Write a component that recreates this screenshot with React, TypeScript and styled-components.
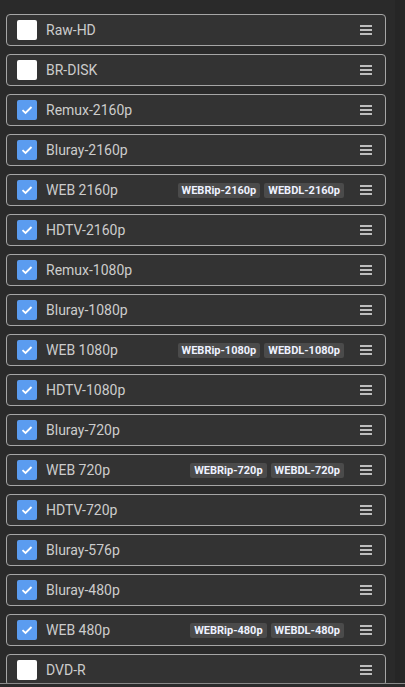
import React from "react";
import styled, { createGlobalStyle } from "styled-components";

const Global = createGlobalStyle`
  html, body { margin: 0; padding: 0; background: #2a2a2a; }
  body { font-family: Roboto, "Noto Sans", sans-serif; overflow: hidden; }
`;

const Page = styled.div`
  width: 405px;
  height: 687px;
  display: flex;
  flex-direction: column;
  overflow: hidden;
`;

const Body = styled.div`
  height: 683px;
  display: flex;
  overflow: hidden;
`;

const List = styled.div`
  width: 395px;
  background: #2a2a2a;
  padding: 14px 0 0 6px;
  box-sizing: border-box;
  display: flex;
  flex-direction: column;
  gap: 8px;
`;

const Track = styled.div`
  flex: 1;
  background: #262626;
`;

const Footer = styled.div`
  flex: 1;
  border-top: 1px solid #8a8a8a;
  background: #2a2a2a;
`;

const Row = styled.div`
  width: 380px;
  height: 32px;
  flex: none;
  box-sizing: border-box;
  border: 1px solid #a6a6a6;
  border-radius: 4px;
  background: #333333;
  display: flex;
  align-items: center;
  padding: 0 13px 0 10px;
`;

const Box = styled.div<{ $checked: boolean }>`
  width: 20px;
  height: 20px;
  border-radius: 2px;
  background: ${(p) => (p.$checked ? "#5b9cf0" : "#ffffff")};
  display: flex;
  align-items: center;
  justify-content: center;
  flex: none;
`;

const Name = styled.span`
  margin-left: 9px;
  font-size: 14px;
  color: #cccccc;
  flex: 1;
`;

const Tags = styled.div`
  display: flex;
  gap: 4px;
  margin-right: 16px;
`;

const Tag = styled.span`
  height: 15px;
  line-height: 15px;
  padding: 0 4px;
  background: #4b4b4b;
  color: #eef2ff;
  font-size: 11px;
  font-weight: 700;
  border-radius: 2px;
`;

const Check = () => (
  <svg width="12" height="10" viewBox="0 0 12 10">
    <path d="M1.5 5.2 L4.5 8 L10.5 2" fill="none" stroke="#fff" strokeWidth="1.8" />
  </svg>
);

const Handle = () => (
  <svg width="12" height="12" viewBox="0 0 12 12">
    <rect x="0" y="1" width="12" height="2" fill="#bdbdbd" />
    <rect x="0" y="5" width="12" height="2" fill="#bdbdbd" />
    <rect x="0" y="9" width="12" height="2" fill="#bdbdbd" />
  </svg>
);

const items: { name: string; checked: boolean; tags?: string[] }[] = [
  { name: "Raw-HD", checked: false },
  { name: "BR-DISK", checked: false },
  { name: "Remux-2160p", checked: true },
  { name: "Bluray-2160p", checked: true },
  { name: "WEB 2160p", checked: true, tags: ["WEBRip-2160p", "WEBDL-2160p"] },
  { name: "HDTV-2160p", checked: true },
  { name: "Remux-1080p", checked: true },
  { name: "Bluray-1080p", checked: true },
  { name: "WEB 1080p", checked: true, tags: ["WEBRip-1080p", "WEBDL-1080p"] },
  { name: "HDTV-1080p", checked: true },
  { name: "Bluray-720p", checked: true },
  { name: "WEB 720p", checked: true, tags: ["WEBRip-720p", "WEBDL-720p"] },
  { name: "HDTV-720p", checked: true },
  { name: "Bluray-576p", checked: true },
  { name: "Bluray-480p", checked: true },
  { name: "WEB 480p", checked: true, tags: ["WEBRip-480p", "WEBDL-480p"] },
  { name: "DVD-R", checked: false },
];

export default function App() {
  return (
    <Page>
      <Global />
      <Body>
        <List>
          {items.map((it) => (
            <Row key={it.name}>
              <Box $checked={it.checked}>{it.checked && <Check />}</Box>
              <Name>{it.name}</Name>
              {it.tags && (
                <Tags>
                  {it.tags.map((t) => (
                    <Tag key={t}>{t}</Tag>
                  ))}
                </Tags>
              )}
              <Handle />
            </Row>
          ))}
        </List>
        <Track />
      </Body>
      <Footer />
    </Page>
  );
}
